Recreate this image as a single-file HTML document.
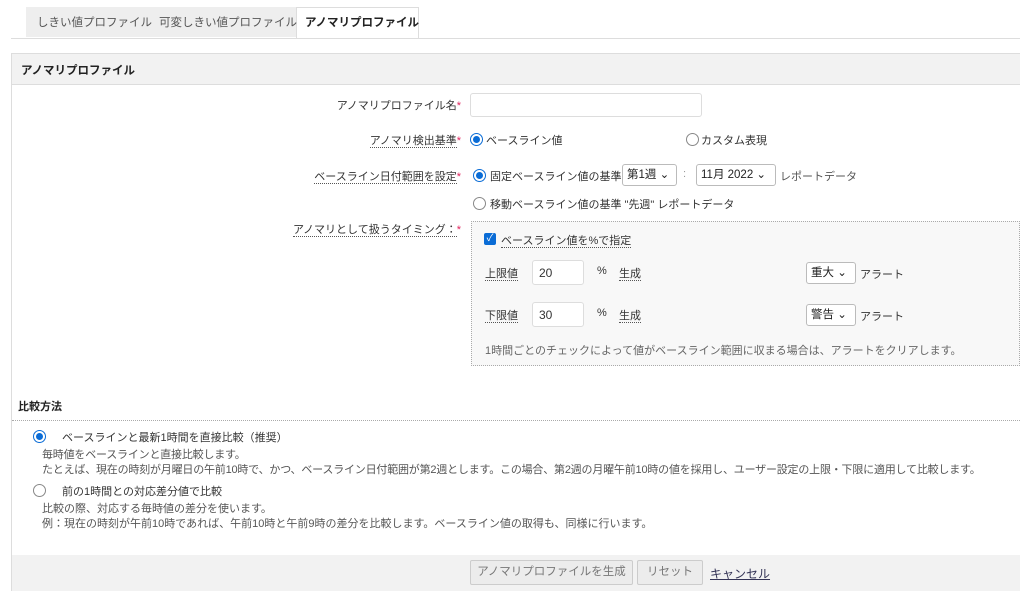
<!DOCTYPE html>
<html><head><meta charset="utf-8"><style>
body{margin:0;width:1020px;height:591px;background:#fff;font-family:"Liberation Sans","Noto Sans CJK JP",sans-serif;font-size:11px;color:#333;position:relative;overflow:hidden}
.a{position:absolute;white-space:nowrap}
.lb{position:absolute;white-space:nowrap;right:559px}
.u{border-bottom:1px dotted #555}
.r{color:#e0245e}
.rad{position:absolute;width:11px;height:11px;border-radius:50%;border:1px solid #888;background:#fff}
.rad.on{border:1px solid #0a6cd6}
.rad.on:after{content:"";position:absolute;left:2px;top:2px;width:7px;height:7px;border-radius:50%;background:#0a6cd6}
.inp{position:absolute;border:1px solid #ddd;border-radius:3px;background:#fff;box-sizing:border-box;padding:0 6px;line-height:24px;font-size:12px}
.sel{position:absolute;border:1px solid #bbb;border-radius:3px;background:#fff;box-sizing:border-box;padding:0 4px;line-height:20px;color:#222;font-size:11.5px}
.btn{position:absolute;border:1px solid #ccc;border-radius:2px;background:#ececec;color:#777;text-align:center;box-sizing:border-box;line-height:23px;font-size:11.5px}
</style></head><body>
<div class="a" style="left:26px;top:7px;width:270px;height:30px;background:#eee"></div>
<div class="a" style="left:296px;top:7px;width:123px;height:32px;background:#fff;border:1px solid #ddd;border-bottom:none;box-sizing:border-box"></div>
<div class="a" style="left:11px;top:38px;width:1009px;height:1px;background:#ddd"></div>
<div class="a" style="left:37px;top:14px;color:#555;font-size:11.5px">しきい値プロファイル</div>
<div class="a" style="left:159px;top:14px;color:#555;font-size:11.5px">可変しきい値プロファイル</div>
<div class="a" style="left:305px;top:14px;font-weight:bold;color:#222;font-size:11.5px">アノマリプロファイル</div>

<div class="a" style="left:11px;top:53px;width:1009px;height:538px;border-left:1px solid #ddd;border-top:1px solid #ddd;box-sizing:border-box"></div>
<div class="a" style="left:12px;top:54px;width:1008px;height:30px;background:#f2f2f2;border-bottom:1px solid #ddd"></div>
<div class="a" style="left:21px;top:62px;font-weight:bold;color:#222;font-size:11.5px">アノマリプロファイル</div>

<div class="lb" style="top:97px">アノマリプロファイル名<span class="r">*</span></div>
<div class="inp" style="left:470px;top:93px;width:232px;height:24px"></div>

<div class="lb" style="top:132px"><span class="u">アノマリ検出基準</span><span class="r">*</span></div>
<div class="rad on" style="left:470px;top:133px"></div>
<div class="a" style="left:486px;top:132px">ベースライン値</div>
<div class="rad" style="left:686px;top:133px"></div>
<div class="a" style="left:701px;top:132px">カスタム表現</div>

<div class="lb" style="top:168px"><span class="u">ベースライン日付範囲を設定</span><span class="r">*</span></div>
<div class="rad on" style="left:473px;top:169px"></div>
<div class="a" style="left:490px;top:168px">固定ベースライン値の基準</div>
<div class="sel" style="left:622px;top:164px;width:55px;height:22px">第1週 ⌄</div>
<div class="a" style="left:683px;top:168px;color:#999">:</div>
<div class="sel" style="left:696px;top:164px;width:80px;height:22px">11月 2022 ⌄</div>
<div class="a" style="left:780px;top:168px;color:#555">レポートデータ</div>
<div class="rad" style="left:473px;top:197px"></div>
<div class="a" style="left:490px;top:196px">移動ベースライン値の基準 "先週" レポートデータ</div>

<div class="lb" style="top:221px"><span class="u">アノマリとして扱うタイミング：</span><span class="r">*</span></div>
<div class="a" style="left:471px;top:221px;width:549px;height:145px;background:#f8f8f8;border:1px dotted #aaa;box-sizing:border-box"></div>
<div class="a" style="left:484px;top:233px;width:12px;height:12px;background:#0a6cd6;border-radius:2px;color:#fff;font-size:10px;line-height:12px;text-align:center">✓</div>
<div class="a" style="left:501px;top:232px"><span class="u">ベースライン値を%で指定</span></div>
<div class="a" style="left:485px;top:265px"><span class="u">上限値</span></div>
<div class="inp" style="left:532px;top:260px;width:52px;height:25px">20</div>
<div class="a" style="left:597px;top:265px">%</div>
<div class="a" style="left:619px;top:265px"><span class="u">生成</span></div>
<div class="sel" style="left:806px;top:262px;width:50px;height:22px">重大 ⌄</div>
<div class="a" style="left:860px;top:266px">アラート</div>
<div class="a" style="left:485px;top:307px"><span class="u">下限値</span></div>
<div class="inp" style="left:532px;top:302px;width:52px;height:25px">30</div>
<div class="a" style="left:597px;top:307px">%</div>
<div class="a" style="left:619px;top:307px"><span class="u">生成</span></div>
<div class="sel" style="left:806px;top:304px;width:50px;height:22px">警告 ⌄</div>
<div class="a" style="left:860px;top:308px">アラート</div>
<div class="a" style="left:485px;top:342px;color:#666">1時間ごとのチェックによって値がベースライン範囲に収まる場合は、アラートをクリアします。</div>

<div class="a" style="left:18px;top:398px;font-weight:bold;color:#222;font-size:11px">比較方法</div>
<div class="a" style="left:12px;top:420px;width:1008px;border-top:1px dotted #aaa"></div>
<div class="rad on" style="left:33px;top:430px"></div>
<div class="a" style="left:62px;top:429px">ベースラインと最新1時間を直接比較（推奨）</div>
<div class="a" style="left:42px;top:448px;color:#555;line-height:15px;letter-spacing:-0.2px">毎時値をベースラインと直接比較します。<br>たとえば、現在の時刻が月曜日の午前10時で、かつ、ベースライン日付範囲が第2週とします。この場合、第2週の月曜午前10時の値を採用し、ユーザー設定の上限・下限に適用して比較します。</div>
<div class="rad" style="left:33px;top:484px"></div>
<div class="a" style="left:62px;top:483px">前の1時間との対応差分値で比較</div>
<div class="a" style="left:42px;top:502px;color:#555;line-height:15px">比較の際、対応する毎時値の差分を使います。<br>例：現在の時刻が午前10時であれば、午前10時と午前9時の差分を比較します。ベースライン値の取得も、同様に行います。</div>

<div class="a" style="left:12px;top:555px;width:1008px;height:36px;background:#f2f2f2"></div>
<div class="btn" style="left:470px;top:560px;width:163px;height:25px">アノマリプロファイルを生成</div>
<div class="btn" style="left:637px;top:560px;width:66px;height:25px">リセット</div>
<div class="a" style="left:710px;top:565px;color:#335;text-decoration:underline;font-size:12px">キャンセル</div>
</body></html>
